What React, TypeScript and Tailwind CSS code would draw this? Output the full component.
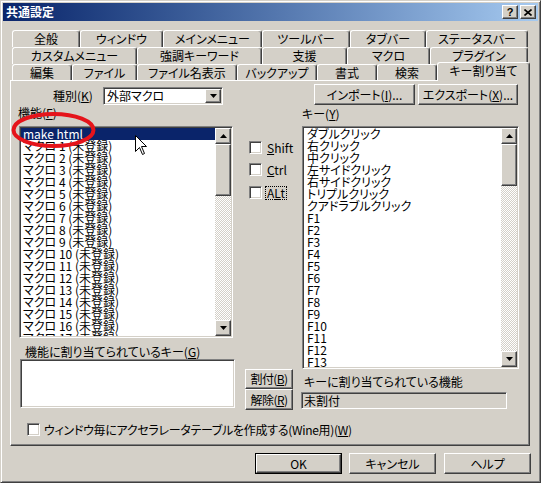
import React from "react";

const raised =
  "bg-[#d4d0c8] border border-t-white border-l-white border-r-[#404040] border-b-[#404040] shadow-[inset_-1px_-1px_#808080]";
const sunken =
  "border border-t-[#808080] border-l-[#808080] border-r-white border-b-white shadow-[inset_1px_1px_#404040,inset_-1px_-1px_#d4d0c8] p-[1px]";
const dither =
  "[background-image:repeating-conic-gradient(#ffffff_0_25%,#d4d0c8_0_50%)] [background-size:2px_2px]";

const U = ({ children }: { children: React.ReactNode }) => (
  <span className="underline decoration-1 underline-offset-[1px]">{children}</span>
);

const Arrow = ({ down }: { down?: boolean }) => (
  <svg width="7" height="4" viewBox="0 0 7 4">
    {down ? <polygon points="0,0 7,0 3.5,4" fill="#000" /> : <polygon points="3.5,0 7,4 0,4" fill="#000" />}
  </svg>
);

const ScrollBar = ({ thumb }: { thumb: string }) => (
  <div className="w-[16px] h-full flex flex-col shrink-0">
    <div className={"h-[16px] shrink-0 flex items-center justify-center " + raised}>
      <Arrow />
    </div>
    <div className={"shrink-0 " + thumb + " " + raised} />
    <div className={"flex-1 " + dither} />
    <div className={"h-[16px] shrink-0 flex items-center justify-center " + raised}>
      <Arrow down />
    </div>
  </div>
);

const CheckBox = () => <div className={"w-[13px] h-[13px] shrink-0 bg-white " + sunken} />;

const row1: [string, string][] = [
  ["全般", "w-[68px]"],
  ["ウィンドウ", "w-[83px]"],
  ["メインメニュー", "w-[99px]"],
  ["ツールバー", "w-[88px]"],
  ["タブバー", "w-[76px]"],
  ["ステータスバー", "w-[102px]"],
];
const row2: [string, string][] = [
  ["カスタムメニュー", "w-[125px]"],
  ["強調キーワード", "w-[125px]"],
  ["支援", "w-[85px]"],
  ["マクロ", "w-[83px]"],
  ["プラグイン", "w-[98px]"],
];
const row3: [string, string][] = [
  ["編集", "w-[60px]"],
  ["ファイル", "w-[65px]"],
  ["ファイル名表示", "w-[100px]"],
  ["バックアップ", "w-[80px]"],
  ["書式", "w-[60px]"],
  ["検索", "w-[60px]"],
];

const tabBase =
  "h-full shrink-0 flex items-center justify-center border-t border-l border-r border-t-white border-l-white border-r-[#404040] shadow-[inset_-1px_0_#808080] rounded-t-[3px]";

const macros = Array.from({ length: 17 }, (_, i) => `マクロ ${i + 1} (未登録)`);
const keys = [
  "ダブルクリック",
  "右クリック",
  "中クリック",
  "左サイドクリック",
  "右サイドクリック",
  "トリプルクリック",
  "クアドラブルクリック",
  ...Array.from({ length: 14 }, (_, i) => `F${i + 1}`),
];

export default function App() {
  return (
    <div className="w-[541px] h-[483px] bg-[#d4d0c8] text-black text-[12px] leading-[12px] font-['Noto_Sans_CJK_JP',sans-serif] [font-feature-settings:'palt'] border border-t-[#d4d0c8] border-l-[#d4d0c8] border-r-[#404040] border-b-[#404040] shadow-[inset_1px_1px_#ffffff,inset_-1px_-1px_#808080] p-[2px] overflow-hidden">
      {/* title bar */}
      <div className="h-[18px] flex items-center bg-gradient-to-r from-[#0a246a] to-[#a6caf0]">
        <span className="pl-[3px] text-white font-bold text-[12px]">共通設定</span>
        <div className="ml-auto mr-[2px] flex gap-[2px]">
          <div className={"w-[16px] h-[14px] flex items-center justify-center font-bold text-[11px] leading-[11px] font-['Liberation_Sans',sans-serif] " + raised}>
            ?
          </div>
          <div className={"w-[16px] h-[14px] flex items-center justify-center " + raised}>
            <svg width="8" height="7" viewBox="0 0 8 7">
              <path d="M0.5 0.5 L7.5 6.5 M7.5 0.5 L0.5 6.5" stroke="#000" strokeWidth="1.6" />
            </svg>
          </div>
        </div>
      </div>

      {/* tabs */}
      <div className="ml-[9px] mt-[9px]">
        <div className="flex h-[17px]">
          {row1.map(([t, w]) => (
            <div key={t} className={tabBase + " " + w}>
              {t}
            </div>
          ))}
        </div>
        <div className="flex h-[17px]">
          {row2.map(([t, w]) => (
            <div key={t} className={tabBase + " " + w}>
              {t}
            </div>
          ))}
        </div>
        <div className="flex items-end h-[16px]">
          {row3.map(([t, w]) => (
            <div key={t} className={tabBase + " " + w}>
              {t}
            </div>
          ))}
          <div className="relative z-10 translate-y-[1px] w-[93px] h-[19px] shrink-0 flex items-start justify-center pt-[2px] bg-[#d4d0c8] border-t border-l border-r border-t-white border-l-white border-r-[#404040] shadow-[inset_-1px_0_#808080] rounded-t-[3px]">
            キー割り当て
          </div>
        </div>
      </div>

      {/* panel */}
      <div className="relative ml-[7px] w-[520px] h-[366px] flex flex-col border border-t-white border-l-white border-r-[#404040] border-b-[#404040] shadow-[inset_-1px_-1px_#808080]">
        <div className="mt-[3px] h-[21px] flex items-end">
          <div className="ml-[42px] w-[50px] mb-[3px]">
            種別(<U>K</U>)
          </div>
          <div className={"w-[120px] h-[18px] flex bg-white " + sunken}>
            <div className="flex-1 pl-[2px] flex items-center">外部マクロ</div>
            <div className={"w-[16px] h-full flex items-center justify-center " + raised}>
              <Arrow down />
            </div>
          </div>
          <div className={"ml-[91px] w-[101px] h-[21px] flex items-center justify-center " + raised}>
            インポート(<U>I</U>)...
          </div>
          <div className={"ml-[3px] w-[100px] h-[21px] flex items-center justify-center " + raised}>
            エクスポート(<U>X</U>)...
          </div>
        </div>

        <div className="flex">
          {/* left column */}
          <div className="ml-[8px] w-[216px] flex flex-col">
            <div className="-ml-[1px] mt-[2px]">
              機能(<U>F</U>)
            </div>
            <div className={"mt-[7px] w-[214px] h-[212px] bg-white flex " + sunken}>
              <div className="flex-1 overflow-hidden">
                <div className="h-[12px] pl-[2px] bg-[#0a246a] text-white whitespace-nowrap">make html</div>
                {macros.map((m) => (
                  <div key={m} className="h-[12px] pl-[2px] whitespace-nowrap">
                    {m}
                  </div>
                ))}
              </div>
              <ScrollBar thumb="h-[52px]" />
            </div>
            <div className="ml-[6px] mt-[8px] whitespace-nowrap">
              機能に割り当てられているキー(<U>G</U>)
            </div>
            <div className={"mt-[1px] ml-[1px] w-[215px] h-[49px] bg-white " + sunken} />
          </div>

          {/* middle column */}
          <div className="ml-[10px] w-[48px] flex flex-col">
            <div className="mt-[36px] pl-[4px] h-[13px] flex items-center">
              <CheckBox />
              <span className="ml-[5px]">
                <U>S</U>hift
              </span>
            </div>
            <div className="mt-[9px] pl-[4px] h-[13px] flex items-center">
              <CheckBox />
              <span className="ml-[5px]">
                <U>C</U>trl
              </span>
            </div>
            <div className="mt-[10px] pl-[4px] h-[13px] flex items-center">
              <CheckBox />
              <span className="ml-[4px] px-[1px] [outline:1px_dotted_#000]">
                A<U>L</U>t
              </span>
            </div>
            <div className={"mt-[170px] w-[48px] h-[20px] flex items-center justify-center tracking-[-0.6px] whitespace-nowrap " + raised}>
              割付(<U>B</U>)
            </div>
            <div className={"w-[48px] h-[21px] flex items-center justify-center tracking-[-0.6px] whitespace-nowrap " + raised}>
              解除(<U>R</U>)
            </div>
          </div>

          {/* right column */}
          <div className="ml-[8px] w-[218px] flex flex-col">
            <div className="ml-[1px] mt-[3px]">
              キー(<U>Y</U>)
            </div>
            <div className={"mt-[6px] ml-[1px] w-[217px] h-[243px] bg-white flex " + sunken}>
              <div className="flex-1 overflow-hidden">
                {keys.map((k) => (
                  <div key={k} className="h-[12px] pl-[3px] whitespace-nowrap">
                    {k}
                  </div>
                ))}
              </div>
              <ScrollBar thumb="h-[42px]" />
            </div>
            <div className="ml-[3px] mt-[7px] whitespace-nowrap">キーに割り当てられている機能</div>
            <div className={"mt-[4px] w-[206px] h-[17px] bg-[#d4d0c8] flex items-center pl-[2px] " + sunken}>
              未割付
            </div>
          </div>
        </div>

        <div className="mt-[13px] h-[13px] flex items-center">
          <div className="ml-[16px]">
            <CheckBox />
          </div>
          <span className="ml-[4px] whitespace-nowrap tracking-[-0.3px]">
            ウィンドウ毎にアクセラレータテーブルを作成する(Wine用)(<U>W</U>)
          </span>
        </div>

        {/* annotation overlay */}
        <svg className="absolute left-0 top-0 pointer-events-none" width="520" height="366">
          <ellipse cx="42.5" cy="49" rx="40" ry="16" fill="none" stroke="#e5141b" strokeWidth="4" />
          <path
            d="M124.5 54.5 L124.5 70.5 L128.5 66.5 L131.5 73.5 L133.5 72.5 L130.5 65.5 L135.5 65.5 Z"
            fill="#fff"
            stroke="#000"
            strokeWidth="1"
          />
        </svg>
      </div>

      {/* dialog buttons */}
      <div className="mt-[7px] flex">
        <div className="ml-[252px] w-[87px] h-[21px] border border-black">
          <div className={"w-full h-full flex items-center justify-center " + raised}>OK</div>
        </div>
        <div className={"ml-[7px] w-[87px] h-[21px] flex items-center justify-center " + raised}>キャンセル</div>
        <div className={"ml-[8px] w-[87px] h-[21px] flex items-center justify-center " + raised}>ヘルプ</div>
      </div>
    </div>
  );
}
